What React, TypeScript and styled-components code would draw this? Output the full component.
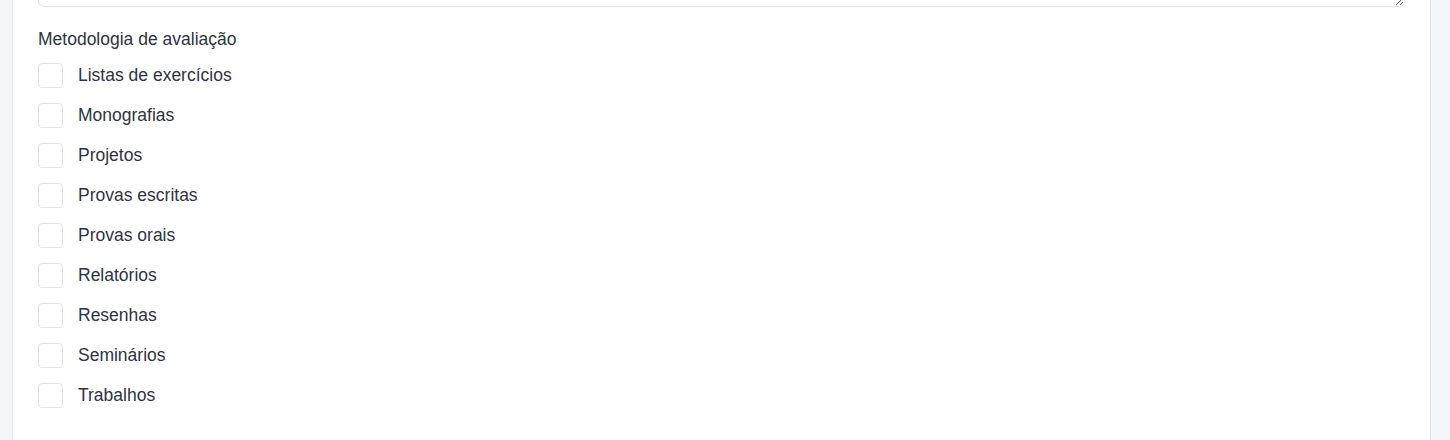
import React from "react";
import styled, { createGlobalStyle } from "styled-components";

const Global = createGlobalStyle`
  html, body { margin: 0; padding: 0; background: #f5f6fa; overflow: hidden; }
  body { font-family: "Liberation Sans", Arial, Helvetica, sans-serif; }
`;

const Page = styled.div`
  padding: 0 19px 0 12px;
  margin-top: -101px;
`;

const Card = styled.section`
  background: #ffffff;
  border: 1px solid #e3e6ec;
  padding: 20px 25px 40px 25px;
  min-height: 600px;
`;

const TextArea = styled.textarea`
  display: block;
  box-sizing: border-box;
  width: 100%;
  height: 87px;
  border: 1px solid #dfe3ea;
  border-radius: 6px;
  padding: 8px 12px;
  font-family: inherit;
  font-size: 16px;
  color: #2d3748;
  resize: vertical;
  outline: none;
`;

const Label = styled.div`
  margin-top: 20px;
  margin-bottom: 4px;
  font-size: 17.5px;
  line-height: 24px;
  color: #2d3441;
`;

const List = styled.div`
  display: flex;
  flex-direction: column;
`;

const Row = styled.label`
  display: flex;
  align-items: center;
  gap: 15px;
  height: 40px;
  cursor: pointer;
`;

const Box = styled.input.attrs({ type: "checkbox" })`
  appearance: none;
  -webkit-appearance: none;
  margin: 0;
  width: 25px;
  height: 25px;
  box-sizing: border-box;
  border: 1px solid #e1e4ea;
  border-radius: 4px;
  background: #fff;
  flex-shrink: 0;
  &:checked {
    background: #3b82f6;
    border-color: #3b82f6;
  }
`;

const Text = styled.span`
  font-size: 17.5px;
  line-height: 24px;
  margin-top: -1px;
  color: #2d3441;
`;

const options = [
  "Listas de exercícios",
  "Monografias",
  "Projetos",
  "Provas escritas",
  "Provas orais",
  "Relatórios",
  "Resenhas",
  "Seminários",
  "Trabalhos",
];

export default function App() {
  return (
    <>
      <Global />
      <Page>
        <Card>
          <TextArea />
          <Label>Metodologia de avaliação</Label>
          <List>
            {options.map((o) => (
              <Row key={o}>
                <Box />
                <Text>{o}</Text>
              </Row>
            ))}
          </List>
        </Card>
      </Page>
    </>
  );
}
